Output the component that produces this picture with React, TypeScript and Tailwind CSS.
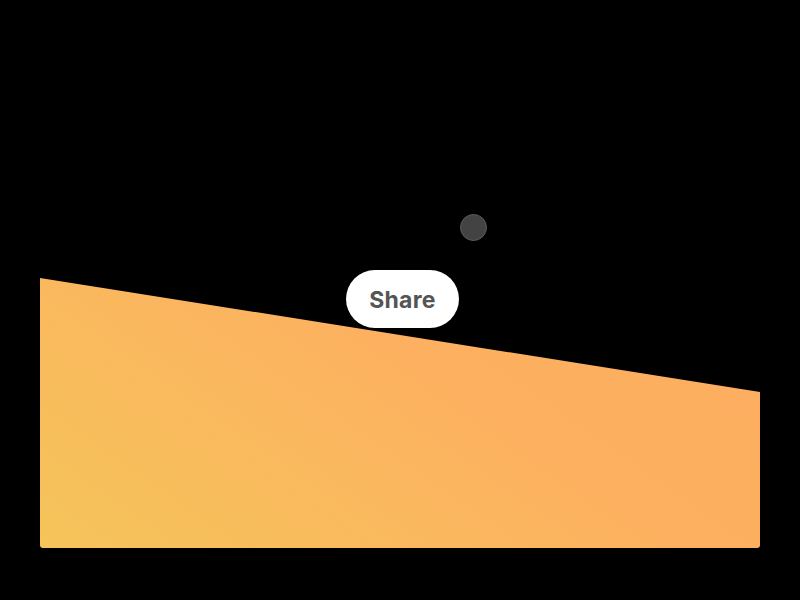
import React from "react";

export default function App() {
  return (
    <div className="relative w-full h-[600px] bg-black overflow-hidden" style={{ fontFamily: "Inter, 'Open Sans', sans-serif" }}>
      <div className="pt-[278px] px-10">
        <div className="h-[270px] rounded-b-[3px] bg-[linear-gradient(35deg,#f5c45a_0%,#f9ba5d_30%,#fdb060_60%,#fdad60_100%)] [clip-path:polygon(0_0,100%_42.2%,100%_100%,0_100%)]" />
      </div>

      {/* floating dot */}
      <div className="absolute left-[460px] top-[214px] w-[27px] h-[27px] rounded-full bg-[#434343] border border-[#5c5c5c]" />

      {/* share pill */}
      <button className="absolute left-[346px] top-[270px] w-[113px] h-[58px] rounded-full bg-white flex items-center justify-center pt-[3px] text-[23px] font-bold text-[#555555] tracking-[0.3px]">
        Share
      </button>
    </div>
  );
}
